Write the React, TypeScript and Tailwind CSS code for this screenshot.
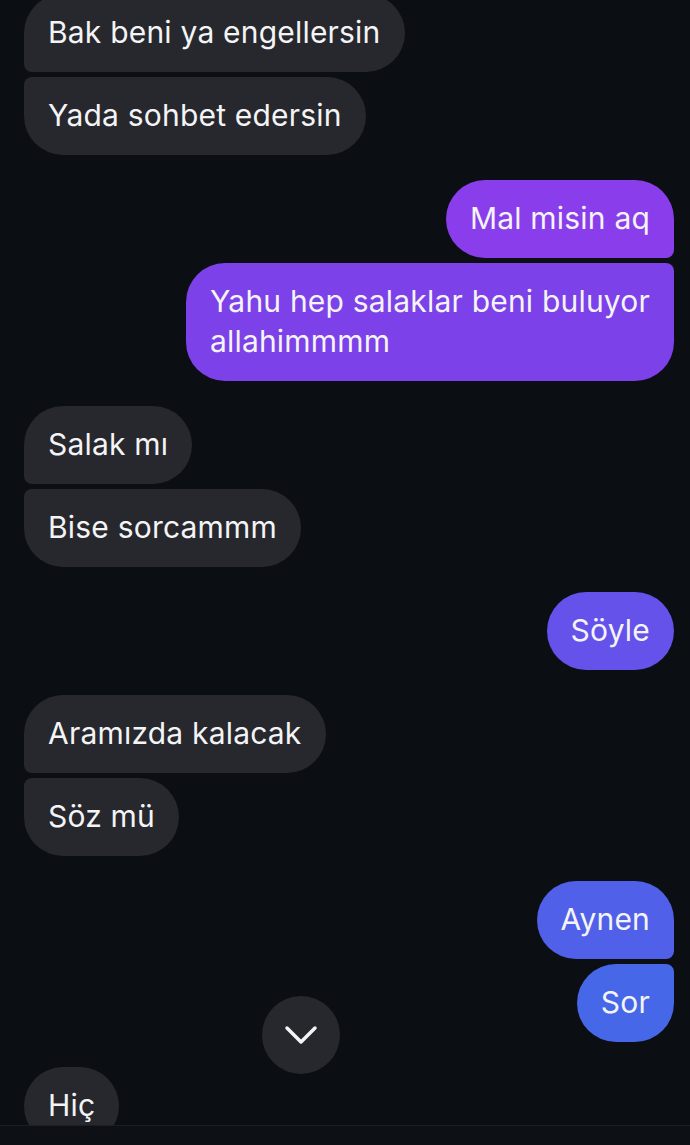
import React from 'react';

type Msg = {
  text: React.ReactNode;
  from: 'me' | 'them';
  shape: string;
  color?: string;
};

type Group = Msg[];

const groups: Group[] = [
  [
    { text: 'Bak beni ya engellersin', from: 'them', shape: 'rounded-[39px] rounded-bl-[8px]' },
    { text: 'Yada sohbet edersin', from: 'them', shape: 'rounded-[39px] rounded-tl-[8px]' },
  ],
  [
    { text: 'Mal misin aq', from: 'me', shape: 'rounded-[39px] rounded-br-[8px]', color: 'bg-[#8a3deb]' },
    {
      text: (
        <>
          Yahu hep salaklar beni buluyor
          <br />
          allahimmmm
        </>
      ),
      from: 'me',
      shape: 'rounded-[39px] rounded-tr-[8px]',
      color: 'bg-[#7c41e8]',
    },
  ],
  [
    { text: 'Salak mı', from: 'them', shape: 'rounded-[39px] rounded-bl-[8px]' },
    { text: 'Bise sorcammm', from: 'them', shape: 'rounded-[39px] rounded-tl-[8px]' },
  ],
  [{ text: 'Söyle', from: 'me', shape: 'rounded-[39px]', color: 'bg-[#6452ea]' }],
  [
    { text: 'Aramızda kalacak', from: 'them', shape: 'rounded-[39px] rounded-bl-[8px]' },
    { text: 'Söz mü', from: 'them', shape: 'rounded-[39px] rounded-tl-[8px]' },
  ],
  [
    { text: 'Aynen', from: 'me', shape: 'rounded-[39px] rounded-br-[8px]', color: 'bg-[#5060e8]' },
    { text: 'Sor', from: 'me', shape: 'rounded-[39px] rounded-tr-[8px]', color: 'bg-[#4667e7]' },
  ],
  [{ text: 'Hiç', from: 'them', shape: 'rounded-[39px]' }],
];

const Bubble = ({ msg }: { msg: Msg }) => {
  const mine = msg.from === 'me';
  return (
    <div className={mine ? 'flex justify-end' : 'flex justify-start'}>
      <div
        className={`${msg.shape} ${mine ? msg.color : 'bg-[#26282d]'} px-6 pt-[18px] pb-[20px] text-[30px] leading-[40px] tracking-[0.2px] text-[#f4f4f6] max-w-[500px]`}
      >
        {msg.text}
      </div>
    </div>
  );
};

export default function App() {
  return (
    <div
      className="relative h-[1145px] w-[690px] overflow-hidden bg-[#0b0e13]"
      style={{ fontFamily: 'Inter, "Noto Sans", sans-serif' }}
    >
      <div className="-mt-[6px] flex flex-col gap-[25px] pl-6 pr-4">
        {groups.map((g, i) => (
          <div key={i} className="flex flex-col gap-[5px]">
            {g.map((m, j) => (
              <Bubble key={j} msg={m} />
            ))}
          </div>
        ))}
      </div>

      {/* scroll to bottom */}
      <button className="absolute left-[262px] top-[996px] flex h-[78px] w-[78px] items-center justify-center rounded-full bg-[#26282d]">
        <svg width="34" height="20" viewBox="0 0 34 20" fill="none">
          <path d="M3 3l14 14L31 3" stroke="#f4f4f6" strokeWidth="3.5" strokeLinecap="round" strokeLinejoin="round" />
        </svg>
      </button>

      {/* composer edge */}
      <div className="absolute bottom-0 left-0 right-0 h-[20px] border-t border-[#1b1e23] bg-[#0d1015]" />
    </div>
  );
}
